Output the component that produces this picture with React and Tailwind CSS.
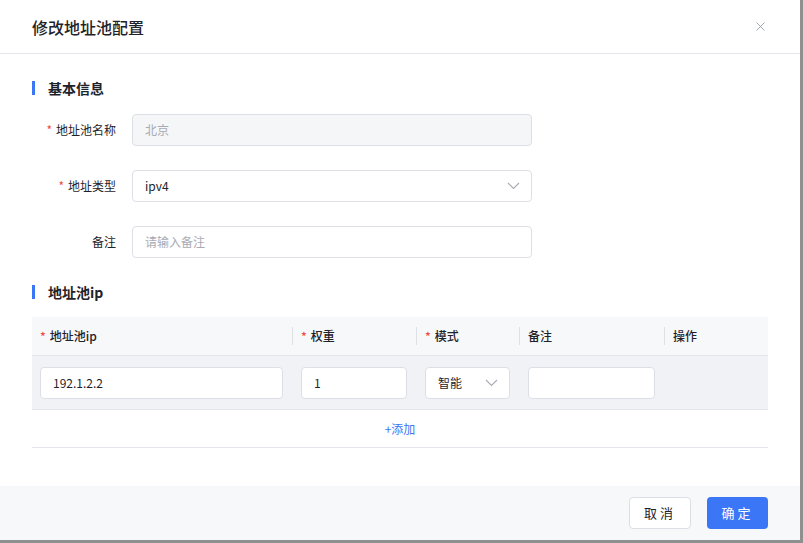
import { X } from "lucide-react";

const font = { fontFamily: '"Noto Sans CJK SC", "Noto Sans", sans-serif' };

function Chevron() {
  return (
    <svg width="13" height="8" viewBox="0 0 13 8" fill="none">
      <polyline points="1,1 6.5,6.5 12,1" stroke="#a8abb2" strokeWidth="1.1" />
    </svg>
  );
}

function Star() {
  return <span className="text-[#f54a45] mr-1">*</span>;
}

function SectionTitle({ children }) {
  return (
    <div className="flex items-center h-5">
      <div className="w-[3px] h-[14px] bg-[#3b76f6]" />
      <div className="ml-[13px] text-[14px] font-semibold text-[#1f2329]">{children}</div>
    </div>
  );
}

function FormRow({ label, required, children }) {
  return (
    <div className="flex items-center h-8">
      <div className="w-[84px] text-right text-[12px] text-[#1f2329]">
        {required && <Star />}
        {label}
      </div>
      <div className="ml-4 w-[400px]">{children}</div>
    </div>
  );
}

export default function App() {
  return (
    <div className="w-[803px] h-[543px] bg-[#8f8f8f]" style={font}>
      <div className="w-[800px] h-[540px] bg-white flex flex-col">
        <div className="h-[54px] border-b border-[#e4e6eb] flex items-center justify-between pl-8 pr-[32px]">
          <div className="text-[16px] font-medium text-[#1f2329]">修改地址池配置</div>
          <X size={15} strokeWidth={1.3} className="text-[#8f959e]" />
        </div>

        <div className="px-8 pt-[24px]">
          <SectionTitle>基本信息</SectionTitle>
          <div className="mt-4 flex flex-col gap-6">
            <FormRow label="地址池名称" required>
              <div className="h-8 rounded border border-[#dcdfe5] bg-[#f5f6f8] flex items-center px-3 text-[12px] text-[#a8abb2]">北京</div>
            </FormRow>
            <FormRow label="地址类型" required>
              <div className="h-8 rounded border border-[#dcdfe5] flex items-center justify-between pl-3 pr-[11px] text-[12px] text-[#1f2329]">
                <span>ipv4</span>
                <Chevron />
              </div>
            </FormRow>
            <FormRow label="备注">
              <div className="h-8 rounded border border-[#dcdfe5] flex items-center px-3 text-[12px] text-[#a8abb2]">请输入备注</div>
            </FormRow>
          </div>

          <div className="mt-[24px]">
            <SectionTitle>地址池ip</SectionTitle>
          </div>

          <div className="mt-[15px] text-[12px] text-[#1f2329]">
            <div className="flex h-[39px] bg-[#f7f8fa] border-b border-[#e4e6eb] items-center font-medium">
              <div className="w-[260px] pl-2"><Star />地址池ip</div>
              <div className="w-[124px] flex items-center"><div className="w-px h-[18px] bg-[#dee0e3]" /><span className="pl-2"><Star />权重</span></div>
              <div className="w-[103px] flex items-center"><div className="w-px h-[18px] bg-[#dee0e3]" /><span className="pl-2"><Star />模式</span></div>
              <div className="w-[145px] flex items-center"><div className="w-px h-[18px] bg-[#dee0e3]" /><span className="pl-2">备注</span></div>
              <div className="flex-1 flex items-center"><div className="w-px h-[18px] bg-[#dee0e3]" /><span className="pl-2">操作</span></div>
            </div>
            <div className="flex h-[54px] bg-[#f0f2f5] border-b border-[#e4e6eb] items-center">
              <div className="w-[260px] pl-2">
                <div className="w-[243px] h-8 rounded bg-white border border-[#dcdfe5] flex items-center px-3">192.1.2.2</div>
              </div>
              <div className="w-[124px] pl-[9px]">
                <div className="w-[106px] h-8 rounded bg-white border border-[#dcdfe5] flex items-center px-3">1</div>
              </div>
              <div className="w-[103px] pl-[9px]">
                <div className="w-[85px] h-8 rounded bg-white border border-[#dcdfe5] flex items-center justify-between pl-3 pr-[11px]">
                  <span>智能</span>
                  <Chevron />
                </div>
              </div>
              <div className="w-[145px] pl-[9px]">
                <div className="w-[127px] h-8 rounded bg-white border border-[#dcdfe5]" />
              </div>
              <div className="flex-1" />
            </div>
            <div className="h-[38px] border-b border-[#e4e6eb] flex items-center justify-center text-[#3b76f6] text-[12px]">+添加</div>
          </div>
        </div>

        <div className="mt-auto h-[54px] bg-[#f7f8fa] flex items-center justify-end gap-4 pr-8">
          <button className="w-[62px] h-8 rounded border border-[#dcdfe5] bg-white text-[13px] text-[#1f2329] tracking-[3px]">取消</button>
          <button className="w-[61px] h-8 rounded bg-[#3b76f6] text-[13px] text-white tracking-[3px]">确定</button>
        </div>
      </div>
    </div>
  );
}
